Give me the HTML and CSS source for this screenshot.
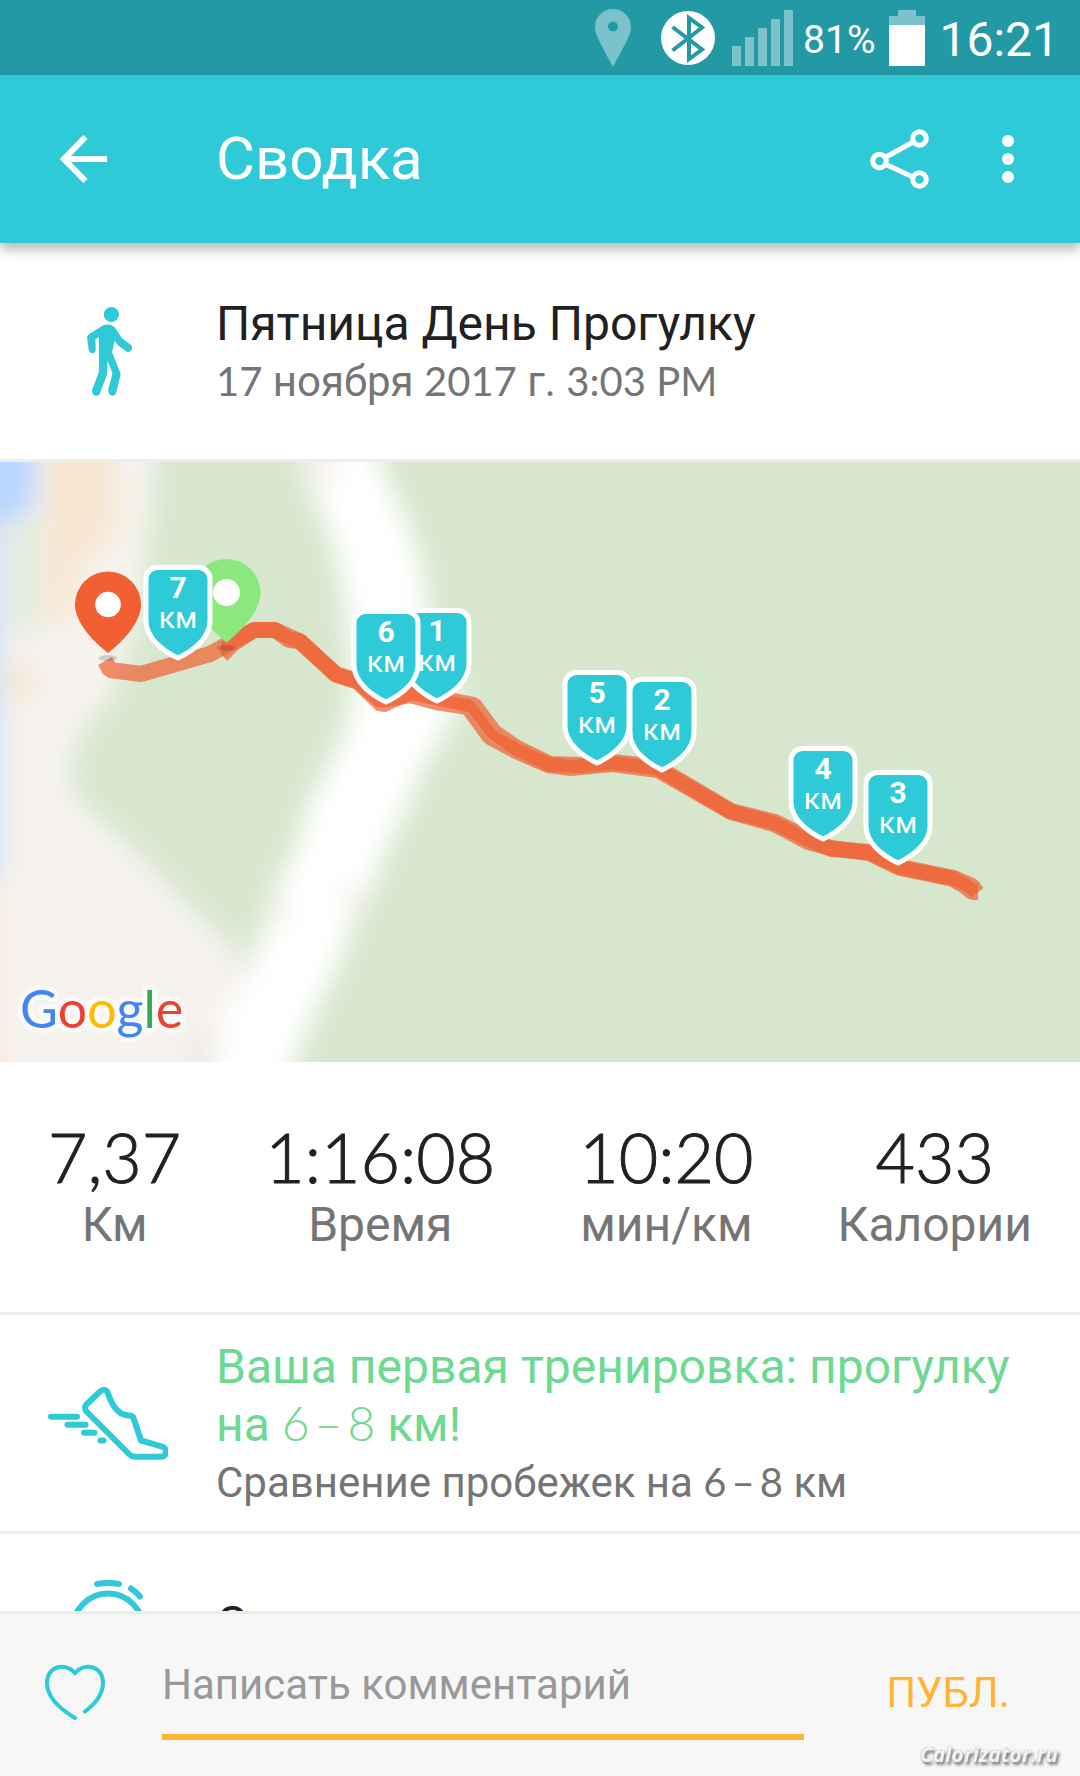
FILE: index.html
```html
<!DOCTYPE html>
<html lang="ru">
<head>
<meta charset="utf-8">
<meta name="viewport" content="width=device-width, initial-scale=1">
<title>Сводка</title>
<link rel="stylesheet" href="styles.css">
</head>
<body>

<div class="status">
  <svg class="status-pin" width="36" height="58" viewBox="0 0 36 58"><path fill-rule="evenodd" d="M18 0a18 18 0 0 1 18 18c0 8-6 17-18 40C6 35 0 26 0 18A18 18 0 0 1 18 0zm0 12.500a5 5 0 1 0 0 10 5 5 0 0 0 0-10z"/></svg>
  <svg class="status-bt" width="54" height="54" viewBox="0 0 54 54"><circle cx="27" cy="27" r="27"/><path d="M11.500 16 41 38.500 28 48V7l13 9.500L11.500 39.500"/></svg>
  <svg class="status-signal" width="61" height="56" viewBox="0 0 61 56"><path d="M0 36h9v20H0zM13 27h9v29h-9zM26 18h9v38h-9zM39 9h9v47h-9zM52 0h9v56h-9z"/></svg>
  <span class="status-level">81%</span>
  <svg class="status-battery" width="36" height="56" viewBox="0 0 36 56"><path class="faded" d="M9 0h18v6h9v9H0V6h9z"/><path d="M0 15h36v41H0z"/></svg>
  <span class="status-time">16:21</span>
</div>

<header>
  <button class="back" aria-label="Назад">
    <svg width="48" height="48" viewBox="0 0 48 48"><path d="M25.500 2 4 24l21.500 22M4 24h43"/></svg>
  </button>
  <h1>Сводка</h1>
  <button class="share" aria-label="Поделиться">
    <svg width="60" height="60" viewBox="0 0 60 60"><path d="m16 28 27-15M16 35.500l27 12.500"/><circle cx="49.500" cy="9.500" r="6.800"/><circle cx="9.500" cy="32" r="6.800"/><circle cx="49.500" cy="50.500" r="6.800"/></svg>
  </button>
  <button class="more" aria-label="Ещё">
    <svg width="12" height="48" viewBox="0 0 12 48"><circle cx="6" cy="6" r="6"/><circle cx="6" cy="24" r="6"/><circle cx="6" cy="42" r="6"/></svg>
  </button>
</header>

<main>
  <section class="row">
    <div class="row-icon">
      <svg width="48" height="94" viewBox="0 0 48 94"><circle cx="27.400" cy="10.500" r="7.600"/><path d="M3.100 34c0-2 .8-3 2.200-4l13-8.300c4-2 9-2 12.700 2l7 10.600 9 6.700c3 3-.5 8.500-4.200 6.700l-8.200-6-4-5-2.500 11.600 8.600 21.700-4.700 19.300c-1.500 4-7.800 3-7.800-3.300l4.300-16.700-5-12.600L22.800 71 16 89.300c-2 4.700-8.700 2.500-7.900-3.300l6.800-18.300V33.300l-3.500 2 .3 10.700c-.2 4.500-6.600 4.500-7.100-.7z"/></svg>
    </div>
    <div class="row-text">
      <h2>Пятница День Прогулку</h2>
      <p><span class="num">17</span> ноября <span class="num">2017</span> г. <span class="num">3:03 PM</span></p>
    </div>
  </section>

  <svg class="map" viewBox="0 0 1080 600" preserveAspectRatio="xMidYMid slice" role="img" aria-label="Маршрут">
    <defs>
      <filter id="soft" x="-20%" y="-20%" width="140%" height="140%"><feGaussianBlur stdDeviation="13"/></filter>
      <path id="shield" class="shield" d="M-32 14A11.500 11.500 0 0 1-20.500 2.500h41A11.500 11.500 0 0 1 32 14v42C32 73 15 86 0 93-15 86-32 73-32 56z"/>
    </defs>

    <rect width="1080" height="600" fill="#d7e7ce"/>
    <g filter="url(#soft)">
      <path fill="#f6f3ee" d="M-40-40H158L150 60 144 130 132 180 115 230 82 270 68 310 80 340 112 368 147 400 185 440 215 468 255 506 270 640H-40z"/>
      <path fill="#f7e6cf" d="M44-40h70v115l-32 24-12 60H46V80z"/>
      <path fill="#b8d6ff" d="M-40-40h76V46L0 62H-40z"/>
      <path fill="#e3ecdc" d="M8 56h32v115H8z"/>
      <path fill="#f7e6cf" d="M8 200h26v40H8z"/>
      <path fill="#cfe1f8" d="M-40 60H2v360h-42z"/>
      <path fill="#f9ebdb" d="M-40 430H3v210h-43z"/>
      <path fill="#fff" d="M298-40H372L380 0 412 72 424 112 426 152 450 200 458 240 444 271 420 311 405 350 385 390 370 430 350 470 335 510 315 549 293 605 285 640H208L215 605 225 549 250 510 262 470 272 430 295 390 305 350 325 311 345 271 352 231 347 152 340 112 330 72 306 20z"/>
      <path fill="#f6eeeb" d="M306-20h26v50h-20zM270 430h18v34h-18zM344 424h16v30h-16z"/>
      <path fill="#ece8e4" d="M232 485h14v32h-14zM190 570h22v60h-22z"/>
    </g>

    <g class="route">
      <path d="M105 199L110 208 141 212 210 192 228 182 254 168 275 168 289 178 300 179 336 213 358 220 382 243 410 230 444 237 474 243 494 270 517 286 550 302 581 303 612 300 657 305 731 349 775 360 809 377 831 387 870 390 901 405 954 416 972 424 977 431"/>
      <path d="M233 193L226 186 254 168 275 168 299 179 336 212 358 219 381 238 410 233 436 240 468 245 490 275 516 289 548 303 571 306 612 302 658 308 731 350 774 362 808 380 831 386 869 391 900 406 953 417 965 424 972 430 978 430"/>
    </g>

    <ellipse cx="108" cy="196" rx="9.500" ry="3" fill="#000" opacity=".15"/>
    <ellipse cx="226" cy="186" rx="9.500" ry="3" fill="#000" opacity=".15"/>
    <path fill="#f15f32" d="M108 109.500a33 33 0 0 1 33 33c0 15-13 33-33 48.500-20-15.500-33-33.500-33-48.500a33 33 0 0 1 33-33z"/>
    <circle cx="108" cy="142.500" r="12.800" fill="#fff"/>
    <path fill="#8ce87e" d="M226.500 97a34 34 0 0 1 34 34c0 15-14 34-34 49.500-20-15.500-34-34.500-34-49.500a34 34 0 0 1 34-34z"/>
    <circle cx="226.500" cy="130.500" r="13.500" fill="#fff"/>

    <g class="marks">
      <g transform="translate(437 146)"><use href="#shield"/><text class="mark-n" y="33">1</text><text y="63">км</text></g>
      <g transform="translate(386 147)"><use href="#shield"/><text class="mark-n" y="33">6</text><text y="63">км</text></g>
      <g transform="translate(178 103)"><use href="#shield"/><text class="mark-n" y="33">7</text><text y="63">км</text></g>
      <g transform="translate(662 215)"><use href="#shield"/><text class="mark-n" y="33">2</text><text y="63">км</text></g>
      <g transform="translate(597 208)"><use href="#shield"/><text class="mark-n" y="33">5</text><text y="63">км</text></g>
      <g transform="translate(823 284)"><use href="#shield"/><text class="mark-n" y="33">4</text><text y="63">км</text></g>
      <g transform="translate(898 308)"><use href="#shield"/><text class="mark-n" y="33">3</text><text y="63">км</text></g>
    </g>

    <text class="google" x="20" y="566"><tspan fill="#4285f4">G</tspan><tspan fill="#ea4335">o</tspan><tspan fill="#fbbc05">o</tspan><tspan fill="#4285f4">g</tspan><tspan fill="#34a853">l</tspan><tspan fill="#ea4335">e</tspan></text>
  </svg>

  <dl class="stats">
    <div><dd>7,37</dd><dt>Км</dt></div>
    <div><dd>1:16:08</dd><dt>Время</dt></div>
    <div><dd>10:20</dd><dt>мин/км</dt></div>
    <div><dd>433</dd><dt>Калории</dt></div>
  </dl>

  <section class="row">
    <div class="row-icon line">
      <svg width="120" height="78" viewBox="0 0 120 78"><path d="M3 32.700h26M19.500 40.700h18M36 48.700h10.500M52.500 56.500h3M52 7.500 38.500 20.500c-2 2-2 5 0 7l43 43c2 2 3 2.300 5 2.300H113c6.500 0 6-8.500 2-10L93 56.500 85.500 34c-1-3-2-2.500-5-2.500C70 31 63.500 20 60 9.500c-1-4-5-5-8-2z"/></svg>
    </div>
    <div class="row-text">
      <h2 class="good">Ваша первая тренировка: прогулку на <span class="num">6<span class="dash">–</span>8</span> км!</h2>
      <p>Сравнение пробежек на <span class="num">6<span class="dash">–</span>8</span> км</p>
    </div>
  </section>

  <section class="row row-short">
    <div class="row-icon line">
      <svg width="80" height="88" viewBox="0 0 80 88"><circle cx="40" cy="48.500" r="35"/><path d="M29 4q11-2 22 0M63 8.500q5 3.500 9 8"/></svg>
    </div>
    <div class="row-text">
      <h2>Сплиты</h2>
    </div>
  </section>
</main>

<form class="comment">
  <button class="like" type="button" aria-label="Нравится">
    <svg width="60" height="56" viewBox="0 0 60 56"><path d="M30 54C15 45 2 33 2 19 2 2 20-2 30 9 40-2 58 2 58 19c0 12-8 21-18 28.500"/></svg>
  </button>
  <input type="text" aria-label="Комментарий" placeholder="Написать комментарий">
  <button class="post" type="submit">ПУБЛ.</button>
</form>

<div class="watermark">Calorizator.ru</div>

</body>
</html>
```
FILE: styles.css
```css
* { box-sizing: border-box; }

body {
  margin: 0;
  height: 100vh;
  display: flex;
  flex-direction: column;
  font-family: Roboto, "Liberation Sans", sans-serif;
  background: #fff;
  color: #212121;
}

h1, h2, p, dl, dd { margin: 0; font-weight: 400; }
svg { display: block; }

button {
  padding: 0;
  border: 0;
  background: none;
  font: inherit;
  cursor: pointer;
}

.num { font-family: Lato, Roboto, sans-serif; }
h2 .num { font-weight: 300; }
p .num { font-size: 40px; }
.dash { margin: 0 5px; }

/* status bar */
.status {
  flex: none;
  height: 75px;
  padding-right: 21px;
  display: flex;
  justify-content: flex-end;
  align-items: center;
  background: #2499a6;
  color: #fff;
}
.status svg { fill: #fff; }
.status .status-pin, .status .status-signal { fill: #7cc2ca; }
.status .faded { fill: #7cc2ca; }
.status-pin { margin-right: 30px; }
.status-bt { margin-right: 17px; }
.status-bt path { fill: none; stroke: #2499a6; stroke-width: 4; }
.status-level { margin: 4px 14px 0 10px; font-size: 39px; }
.status-time { margin: 4px 0 0 14px; font-size: 48px; }

/* app bar */
header {
  flex: none;
  position: relative;
  z-index: 1;
  height: 168px;
  display: flex;
  align-items: center;
  background: #2ecad8;
  color: #fff;
  box-shadow: 0 6px 12px rgba(0, 0, 0, 0.3);
}
header h1 { flex: 1; font-size: 60px; line-height: 72px; }
header svg { margin: 0 auto; fill: none; stroke: #fff; }
.back { width: 168px; height: 168px; margin-right: 48px; }
.back svg { stroke-width: 6; }
.share { width: 108px; height: 168px; }
.share svg { stroke-width: 5; }
.more { width: 108px; height: 168px; margin-right: 18px; }
.more svg { fill: #fff; stroke: none; }

main {
  flex: 1;
  min-height: 0;
  overflow-y: auto;
  scrollbar-width: none;
}

.row {
  min-height: 219px;
  display: flex;
  align-items: center;
  border-bottom: 3px solid #ededed;
}
.row-short { min-height: 183px; }
.row-icon { flex: none; width: 216px; }
.row-icon svg { margin: 0 auto; fill: #2ecad8; }
.row-icon.line svg {
  fill: none;
  stroke: #2ecad8;
  stroke-width: 6;
  stroke-linecap: round;
  stroke-linejoin: round;
}
.row-text { flex: 1; padding-right: 48px; }
.row-text h2 { font-size: 48px; line-height: 56px; }
.row-text p { margin-top: 4px; font-size: 42px; line-height: 50px; color: #757575; }
.row-text .good { color: #6dd991; }

/* map */
.map { width: 100%; height: 600px; }
.route path {
  fill: none;
  stroke: #f05f30;
  stroke-opacity: 0.7;
  stroke-width: 16;
  stroke-linejoin: bevel;
}
.shield { fill: #2ecad8; stroke: #fff; stroke-width: 5; stroke-linejoin: round; }
.marks text { fill: #fff; font-size: 30px; text-anchor: middle; }
.marks .mark-n { font-weight: 700; }
.google {
  font-family: Lato, sans-serif;
  font-size: 52px;
  stroke: rgba(255, 255, 255, 0.6);
  stroke-width: 10;
  stroke-linejoin: round;
  paint-order: stroke;
}

/* totals */
.stats {
  height: 253px;
  padding: 55px 48px 0;
  display: flex;
  justify-content: space-between;
  text-align: center;
  border-bottom: 3px solid #ededed;
}
.stats div { display: flex; flex-direction: column; }
.stats dd {
  font-family: Lato, sans-serif;
  font-weight: 300;
  font-size: 68px;
  line-height: 80px;
  -webkit-text-stroke: 1px #212121;
}
.stats dt { font-size: 48px; line-height: 56px; color: #757575; }

/* comment form */
.comment {
  flex: none;
  height: 165px;
  display: flex;
  align-items: center;
  gap: 12px;
  border-top: 3px solid #ededed;
  background: #f7f7f7;
}
.like, .post { flex: none; height: 120px; padding-bottom: 6px; }
.like { width: 150px; }
.like svg { margin: 0 auto; fill: none; stroke: #2ecad8; stroke-width: 4; stroke-linecap: round; }
.post { width: 264px; font-size: 42px; color: #ffb534; }
.comment input {
  flex: 1;
  min-width: 0;
  height: 90px;
  padding: 0 0 16px;
  border: 0;
  border-bottom: 6px solid #ffb534;
  outline: 0;
  background: none;
  font: inherit;
  font-size: 42px;
  color: #212121;
}
.comment input::placeholder { color: #999; }

.watermark {
  position: absolute;
  right: 22px;
  bottom: 8px;
  font: italic 700 21px/28px "Open Sans", sans-serif;
  color: #f4f4f4;
  text-shadow: 0 0 1px #888, 2px 3px 3px #777;
}
```
